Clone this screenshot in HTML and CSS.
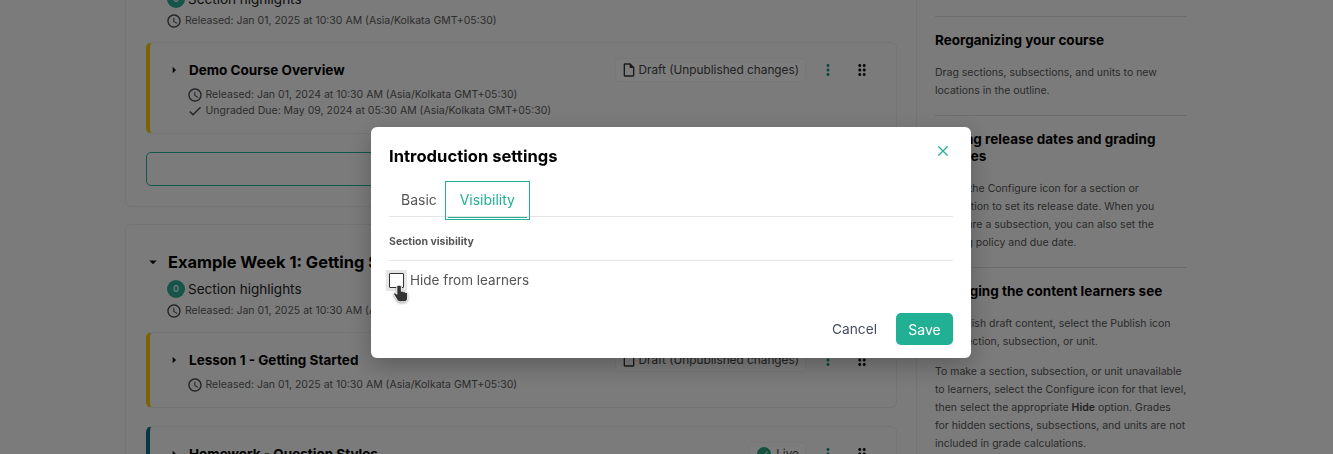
FILE: index.html
```html
<!DOCTYPE html>
<html lang="en">
<head>
<meta charset="utf-8">
<title>Course outline</title>
<link rel="stylesheet" href="styles.css">
</head>
<body>
<svg class="defs" width="0" height="0" aria-hidden="true">
  <symbol id="clock" viewBox="0 0 24 24"><path fill="currentColor" d="M11.99 2C6.47 2 2 6.48 2 12s4.47 10 9.99 10C17.52 22 22 17.52 22 12S17.52 2 11.99 2zM12 20c-4.42 0-8-3.58-8-8s3.58-8 8-8 8 3.58 8 8-3.58 8-8 8zm.5-13H11v6l5.25 3.15.75-1.23-4.5-2.67z"/></symbol>
  <symbol id="check" viewBox="0 0 24 24"><path fill="currentColor" d="M9 16.17 4.83 12l-1.42 1.41L9 19 21 7l-1.41-1.41z"/></symbol>
  <symbol id="file" viewBox="0 0 24 24"><path fill="currentColor" d="M14 2H6c-1.1 0-2 .9-2 2v16c0 1.1.9 2 2 2h12c1.1 0 2-.9 2-2V8l-6-6zM6 20V4h7v5h5v11H6z"/></symbol>
  <symbol id="dots" viewBox="0 0 24 24"><path fill="currentColor" d="M12 8c1.1 0 2-.9 2-2s-.9-2-2-2-2 .9-2 2 .9 2 2 2zm0 2c-1.1 0-2 .9-2 2s.9 2 2 2 2-.9 2-2-.9-2-2-2zm0 6c-1.1 0-2 .9-2 2s.9 2 2 2 2-.9 2-2-.9-2-2-2z"/></symbol>
  <symbol id="drag" viewBox="0 0 24 24"><path fill="currentColor" d="M11 18c0 1.100-.9 2-2 2s-2-.9-2-2 .9-2 2-2 2 .9 2 2zm-2-8c-1.100 0-2 .9-2 2s.9 2 2 2 2-.9 2-2-.9-2-2-2zm0-6c-1.100 0-2 .9-2 2s.9 2 2 2 2-.9 2-2-.9-2-2-2zm6 4c1.100 0 2-.9 2-2s-.9-2-2-2-2 .9-2 2 .9 2 2 2zm0 2c-1.100 0-2 .9-2 2s.9 2 2 2 2-.9 2-2-.9-2-2-2zm0 6c-1.100 0-2 .9-2 2s.9 2 2 2 2-.9 2-2-.9-2-2-2z"/></symbol>
  <symbol id="right" viewBox="0 0 24 24"><path fill="currentColor" d="m10 17 5-5-5-5v10z"/></symbol>
  <symbol id="down" viewBox="0 0 24 24"><path fill="currentColor" d="m7 10 5 5 5-5H7z"/></symbol>
</svg>

<div class="page">
  <main class="outline">
    <section class="card">
      <h2 class="section-title"><svg class="caret"><use href="#down"/></svg>Introduction</h2>
      <div class="highlights"><span class="count">0</span>Section highlights</div>
      <div class="meta section-meta"><svg class="ico"><use href="#clock"/></svg>Released: Jan 01, 2025 at 10:30 AM (Asia/Kolkata GMT+05:30)</div>
      <article class="sub sub-draft">
        <div class="sub-head">
          <svg class="caret-sm"><use href="#right"/></svg>
          <h3 class="sub-title">Demo Course Overview</h3>
          <span class="status"><svg class="status-ico"><use href="#file"/></svg>Draft (Unpublished changes)</span>
          <svg class="menu"><use href="#dots"/></svg>
          <svg class="grip"><use href="#drag"/></svg>
        </div>
        <div class="meta"><svg class="ico"><use href="#clock"/></svg>Released: Jan 01, 2024 at 10:30 AM (Asia/Kolkata GMT+05:30)</div>
        <div class="meta"><svg class="ico"><use href="#check"/></svg>Ungraded Due: May 09, 2024 at 05:30 AM (Asia/Kolkata GMT+05:30)</div>
      </article>
      <div class="new-btn"></div>
    </section>

    <section class="card">
      <h2 class="section-title"><svg class="caret"><use href="#down"/></svg>Example Week 1: Getting Started</h2>
      <div class="highlights"><span class="count">0</span>Section highlights</div>
      <div class="meta section-meta"><svg class="ico"><use href="#clock"/></svg>Released: Jan 01, 2025 at 10:30 AM (Asia/Kolkata GMT+05:30)</div>
      <article class="sub sub-draft sub-short">
        <div class="sub-head">
          <svg class="caret-sm"><use href="#right"/></svg>
          <h3 class="sub-title">Lesson 1 - Getting Started</h3>
          <span class="status"><svg class="status-ico"><use href="#file"/></svg>Draft (Unpublished changes)</span>
          <svg class="menu"><use href="#dots"/></svg>
          <svg class="grip"><use href="#drag"/></svg>
        </div>
        <div class="meta"><svg class="ico"><use href="#clock"/></svg>Released: Jan 01, 2025 at 10:30 AM (Asia/Kolkata GMT+05:30)</div>
      </article>
      <article class="sub sub-live">
        <div class="sub-head">
          <svg class="caret-sm"><use href="#right"/></svg>
          <h3 class="sub-title">Homework - Question Styles</h3>
          <span class="status"><span class="live-dot"><svg class="live-check"><use href="#check"/></svg></span>Live</span>
          <svg class="menu"><use href="#dots"/></svg>
          <svg class="grip"><use href="#drag"/></svg>
        </div>
      </article>
    </section>
  </main>

  <aside class="help">
    <div class="help-block">
      <h4 class="help-title">Reorganizing your course</h4>
      <p class="help-text">Drag sections, subsections, and units to new locations in the outline.</p>
    </div>
    <div class="help-block">
      <h4 class="help-title">Setting release dates and grading policies</h4>
      <p class="help-text">Select the Configure icon for a section or subsection to set its release date. When you configure a subsection, you can also set the grading policy and due date.</p>
    </div>
    <div class="help-block">
      <h4 class="help-title">Changing the content learners see</h4>
      <p class="help-text">To publish draft content, select the Publish icon for a section, subsection, or unit.</p>
      <p class="help-text">To make a section, subsection, or unit unavailable to learners, select the Configure icon for that level, then select the appropriate <b class="strong">Hide</b> option. Grades for hidden sections, subsections, and units are not included in grade calculations.</p>
    </div>
  </aside>
</div>

<div class="overlay">
  <div class="modal" role="dialog">
    <div class="modal-head">
      <h1 class="modal-title">Introduction settings</h1>
      <svg class="close" viewBox="0 0 12 12"><path d="M.5.5l11 11M11.500.5l-11 11"/></svg>
    </div>
    <div class="tabs">
      <span class="tab">Basic</span>
      <span class="tab tab-active">Visibility</span>
    </div>
    <h5 class="field-title">Section visibility</h5>
    <label class="check-row">
      <span class="check-wrap"><span class="checkbox"></span></span>
      <span class="check-label">Hide from learners</span>
    </label>
    <div class="modal-foot">
      <span class="btn-cancel">Cancel</span>
      <span class="btn-save">Save</span>
    </div>
    <svg class="cursor" viewBox="0 0 16 20">
      <path d="M5 1.300c-.8 0-1.400.6-1.400 1.400v8.200L2.600 9.800c-.6-.6-1.500-.6-2-.1-.4.400-.4 1-.1 1.500l3 5c.8 1.300 1.900 2.500 3.800 2.500h3.700c2.400 0 4-1.700 4-4v-4.500c0-.8-.6-1.300-1.200-1.300-.3 0-.6.100-.8.300-.1-.7-.7-1.200-1.400-1.200-.4 0-.7.100-.9.400-.2-.6-.7-1-1.300-1-.4 0-.7.100-1 .3V2.700c0-.8-.6-1.400-1.400-1.400z"/>
    </svg>
  </div>
</div>
</body>
</html>
```
FILE: styles.css
```css
* { box-sizing: border-box; }
html, body { margin: 0; height: 454px; overflow: hidden; }
body { background: #f7f7f7; font-family: Inter, "Liberation Sans", sans-serif; color: #454545; }
.defs { position: absolute; }

.page { display: flex; align-items: flex-start; margin-top: -66px; padding-left: 125px; }
.outline { width: 792px; flex: none; display: flex; flex-direction: column; gap: 17px; }
.card { border: 1px solid #e9e9e9; border-radius: 6px; padding: 24px 19px 20px 20px; background: #f6f6f6; }
.section-title { margin: 0; height: 26px; display: flex; align-items: center; font-size: 16.400px; font-weight: 700; color: #000; line-height: 26px; white-space: nowrap; }
.caret { width: 18px; height: 18px; margin: 0 6px 0 -2px; color: #111; flex: none; }
.highlights { display: flex; align-items: center; gap: 3px; height: 18px; margin: 5px 0 0 21px; font-size: 13.500px; line-height: 18px; color: #222; }
.count { width: 18px; height: 18px; border-radius: 50%; background: #2ba88d; color: #e8f5f2; font-size: 9px; font-weight: 600; display: flex; align-items: center; justify-content: center; }
.meta { display: flex; align-items: center; gap: 3px; height: 16px; font-size: 10.500px; line-height: 16px; color: #5a5a5a; white-space: nowrap; }
.section-meta { margin: 5px 0 13px 20px; }
.ico { width: 16px; height: 16px; color: #444; flex: none; }

.sub { border: 1px solid #e9e9e9; border-left: 4px solid #f2cf00; border-radius: 6px; height: 92px; padding: 15px 25px 0 24px; }
.sub-short { height: 76px; margin-bottom: 18px; }
.sub-draft { border-left-color: #f0c800; }
.sub-live { border-left-color: #0d6f8f; }
.sub-head { display: flex; align-items: center; height: 24px; margin: 0 0 5px -24px; padding-left: 16px; }
.caret-sm { width: 16px; height: 16px; flex: none; color: #111; margin-right: 7px; }
.sub-title { margin: 0; flex: 1; font-size: 13.500px; font-weight: 700; color: #000; white-space: nowrap; }
.status { display: flex; align-items: center; gap: 2px; height: 24px; padding: 0 6px 0 5px; border: 1px solid #efefef; border-radius: 5px; background: #fbfbfb; font-size: 11.800px; color: #444; white-space: nowrap; }
.status-ico { width: 16px; height: 16px; color: #333; }
.live-dot { width: 14px; height: 14px; border-radius: 50%; background: #28a37f; display: flex; align-items: center; justify-content: center; margin: 0 3px 0 2px; }
.live-check { width: 10px; height: 10px; color: #fff; }
.menu { width: 18px; height: 18px; color: #17917a; margin-left: 13px; flex: none; }
.grip { width: 18px; height: 18px; color: #111; margin-left: 16px; flex: none; }
.sub .meta { margin-left: 12.500px; }
.new-btn { height: 34px; margin-top: 18px; border: 1px solid #21b093; border-radius: 5px; }

.help { width: 270px; flex: none; padding: 82px 0 0 18px; }
.help-block { border-top: 1px solid #dadada; padding: 15px 0 15px; }
.help-title { margin: 0 0 15px; font-size: 13.500px; line-height: 17px; font-weight: 700; color: #000; }
.help-text { margin: 0 0 12px; font-size: 10.500px; line-height: 18px; color: #555; }
.help-text:last-child { margin-bottom: 0; }
.strong { font-weight: 600; color: #444; }

.overlay { position: fixed; inset: 0; background: rgba(0, 0, 0, .5); }
.modal { position: absolute; left: 371px; top: 127px; width: 600px; height: 231px; padding: 0 18px; background: #fff; border-radius: 6px; box-shadow: 0 8px 24px rgba(0, 0, 0, .25); }
.modal-head { display: flex; justify-content: space-between; padding-top: 19px; height: 54px; }
.modal-title { margin: 0; font-size: 16.600px; line-height: 20px; font-weight: 700; color: #000; }
.close { width: 10px; height: 10px; margin-right: 5px; }
.close path { fill: none; stroke: #21b093; stroke-width: 1.500; }
.tabs { display: flex; height: 36px; border-bottom: 1px solid #e5e5e5; }
.tab { display: flex; align-items: center; justify-content: center; height: 39px; padding: 0 12px 3px; font-size: 14px; color: #555; }
.tab-active { position: relative; width: 85px; margin-left: -4px; color: #21b093; outline: 1px solid #21b093; outline-offset: -1px; }
.tab-active::after { content: ""; position: absolute; left: 3px; right: 3px; bottom: 2px; height: 1px; background: #21b093; }
.field-title { margin: 18px 0 11px; padding-bottom: 12px; border-bottom: 1px solid #e5e5e5; font-size: 10.500px; line-height: 13px; font-weight: 700; color: #555; }
.check-row { display: flex; align-items: center; gap: 3px; height: 17px; font-size: 13.500px; color: #555; }
.check-label { padding-bottom: 2px; }
.check-wrap { width: 21px; height: 21px; margin-left: -3px; background: #e6e6e6; display: flex; align-items: center; justify-content: center; flex: none; }
.checkbox { width: 15px; height: 15px; background: #fff; border: 1px solid #333; border-radius: 1px; }
.modal-foot { display: flex; justify-content: flex-end; align-items: center; gap: 19px; margin-top: 24px; }
.btn-cancel { font-size: 13.750px; color: #454d5c; }
.btn-save { width: 57px; height: 32px; border-radius: 5px; background: #21b093; color: #fff; font-size: 14px; display: flex; align-items: center; justify-content: center; }
.cursor { position: absolute; left: 22px; top: 157px; width: 16px; height: 19px; filter: drop-shadow(0 1px 1px rgba(0, 0, 0, .35)); }
.cursor path { fill: #333; stroke: #fff; stroke-width: 1; }
```
